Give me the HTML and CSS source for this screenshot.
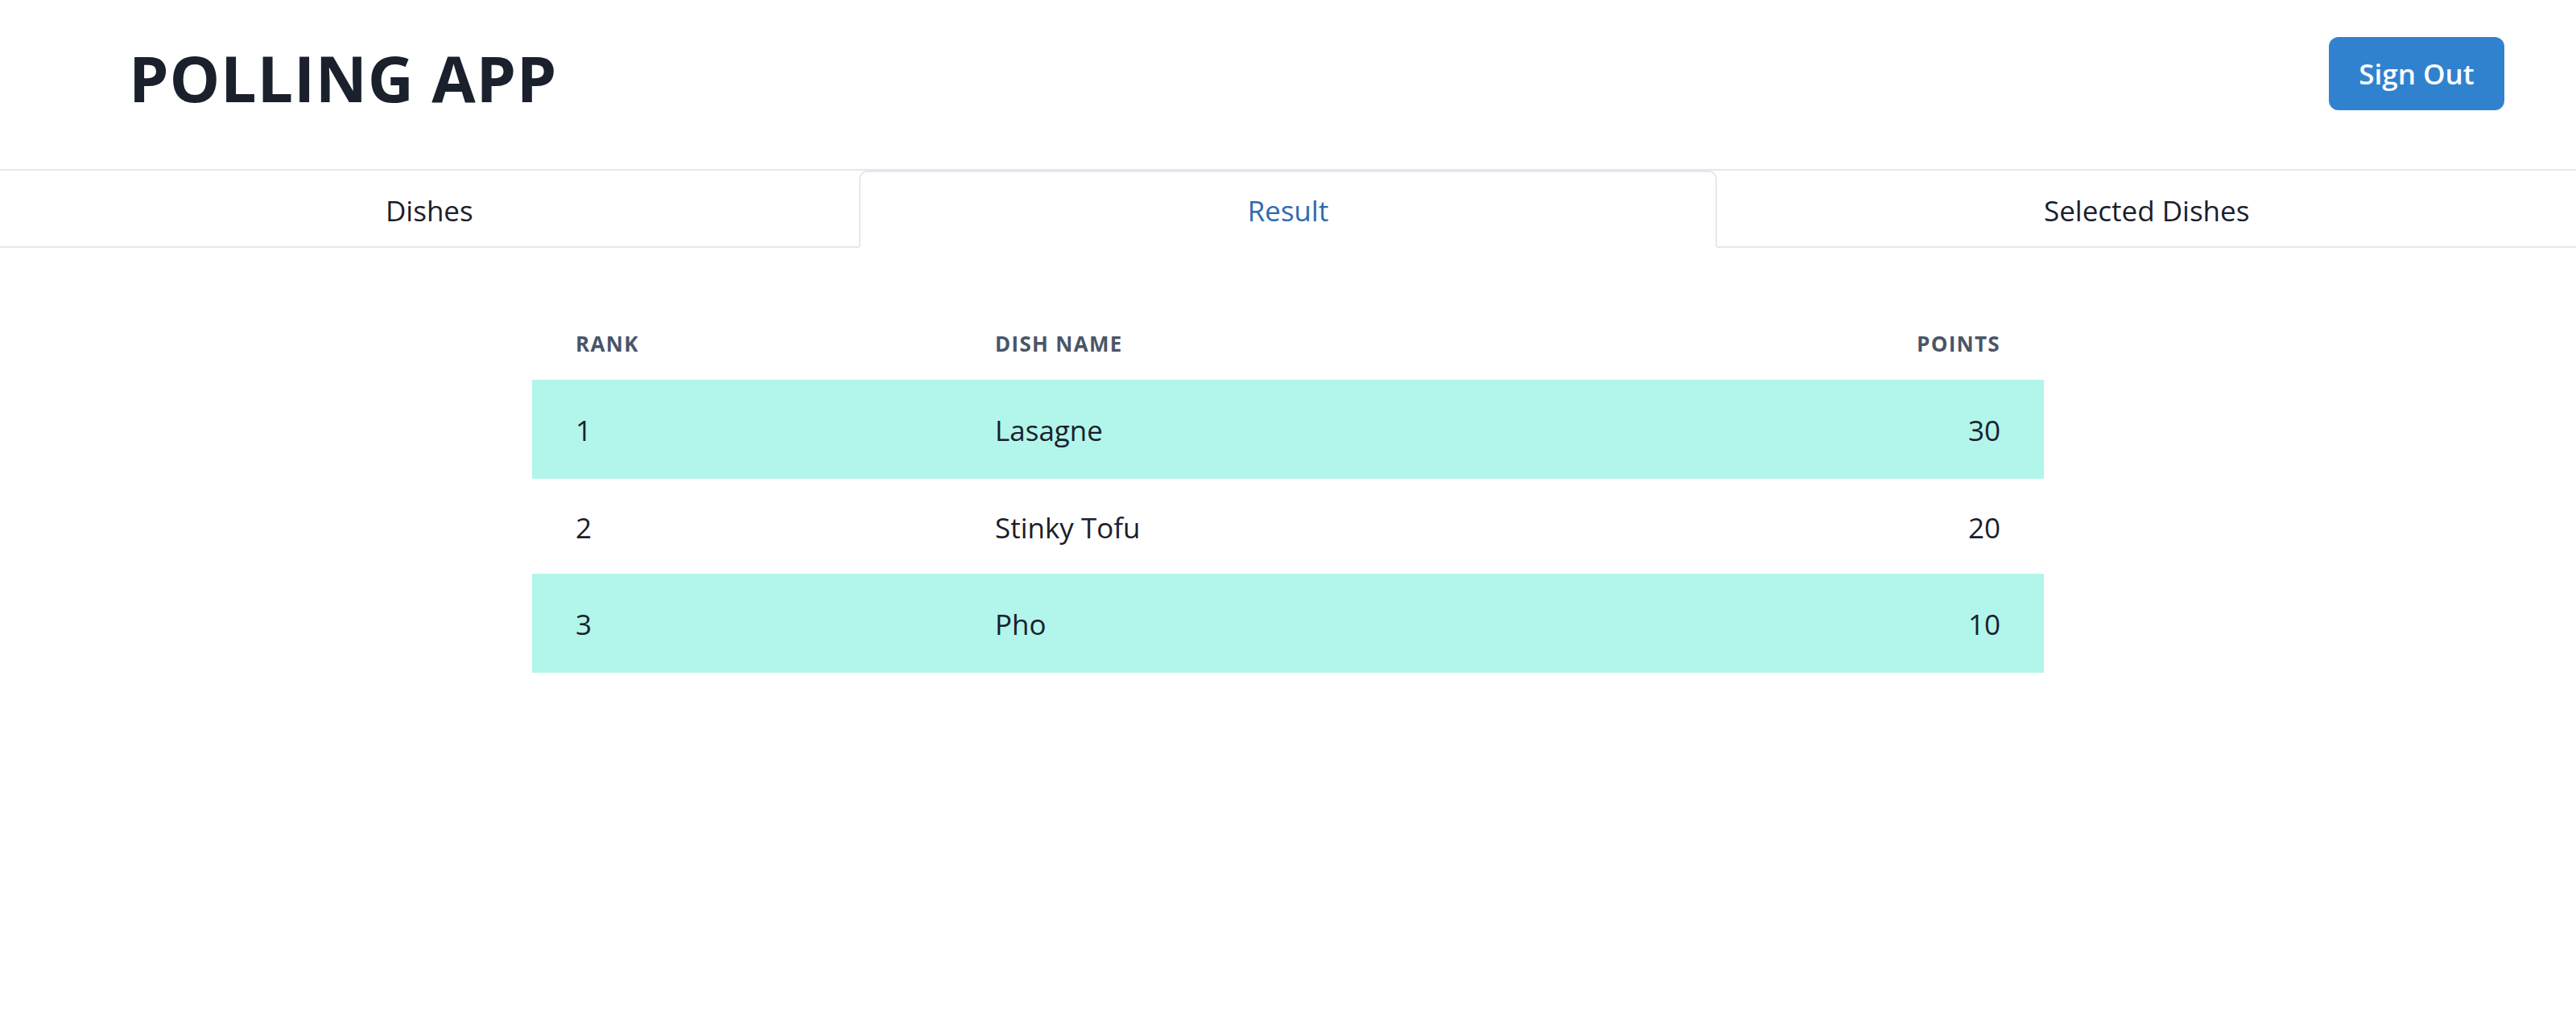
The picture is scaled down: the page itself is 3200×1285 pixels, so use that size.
FILE: index.html
```html
<!DOCTYPE html>
<html lang="en">
<head>
<meta charset="utf-8">
<title>Polling App</title>
<link rel="stylesheet" href="styles.css">
</head>
<body>
  <header class="app-header">
    <h1 class="app-title">POLLING APP</h1>
    <button class="signout-btn" type="button">Sign Out</button>
  </header>
  <nav class="tablist">
    <div class="tab">Dishes</div>
    <div class="tab tab-selected">Result</div>
    <div class="tab">Selected Dishes</div>
  </nav>
  <main class="panel">
    <table class="result-table">
      <thead>
        <tr>
          <th class="col-rank">Rank</th>
          <th class="col-name">Dish Name</th>
          <th class="col-points">Points</th>
        </tr>
      </thead>
      <tbody>
        <tr class="row-hl">
          <td class="col-rank">1</td>
          <td class="col-name">Lasagne</td>
          <td class="col-points">30</td>
        </tr>
        <tr class="row-plain">
          <td class="col-rank">2</td>
          <td class="col-name">Stinky Tofu</td>
          <td class="col-points">20</td>
        </tr>
        <tr class="row-hl">
          <td class="col-rank">3</td>
          <td class="col-name">Pho</td>
          <td class="col-points">10</td>
        </tr>
      </tbody>
    </table>
  </main>
</body>
</html>
```

FILE: styles.css
```css
* {
  box-sizing: border-box;
}

html, body {
  margin: 0;
  padding: 0;
  background: #ffffff;
}

body {
  font-family: "Open Sans", "Noto Sans", "Liberation Sans", sans-serif;
  color: #1A202C;
}

.app-header {
  display: flex;
  justify-content: space-between;
  align-items: flex-start;
  height: 212px;
  padding: 0 89px 0 160px;
  border-bottom: 2px solid #E2E8F0;
}

.app-title {
  margin: 50px 0 0 0;
  font-size: 79px;
  line-height: 1.2;
  font-weight: 700;
  letter-spacing: 0.01em;
  color: #1A202C;
}

.signout-btn {
  margin-top: 46px;
  width: 218px;
  height: 91px;
  border: none;
  border-radius: 12px;
  background: #3182CE;
  color: #ffffff;
  font-family: inherit;
  font-size: 35px;
  font-weight: 600;
  line-height: 1.2;
  display: flex;
  align-items: center;
  justify-content: center;
  padding: 0;
}

.tablist {
  display: flex;
  height: 96px;
  border-bottom: 2px solid #E2E8F0;
}

.tab {
  flex: 1 1 0;
  height: 96px;
  margin-bottom: -2px;
  padding-top: 3px;
  border: 2px solid transparent;
  display: flex;
  align-items: center;
  justify-content: center;
  font-size: 35px;
  line-height: 1.2;
  color: #1A202C;
}

.tab-selected {
  border-color: #E2E8F0;
  border-bottom-color: #ffffff;
  border-radius: 10px 10px 0 0;
  color: #2B6CB0;
}

.panel {
  padding: 74px 0 0;
}

.result-table {
  width: 1878px;
  margin: 0 auto;
  border-collapse: collapse;
  border-spacing: 0;
}

.result-table th {
  height: 90px;
  padding: 0 54px;
  font-size: 26px;
  font-weight: 700;
  letter-spacing: 0.05em;
  text-transform: uppercase;
  color: #4A5568;
  vertical-align: middle;
  text-align: left;
}

.result-table td {
  padding: 2px 54px 0;
  font-size: 35px;
  color: #1A202C;
  vertical-align: middle;
  text-align: left;
}

.result-table .col-rank {
  width: 521px;
}

.result-table .col-points {
  text-align: right;
}

.row-hl td {
  height: 123px;
  background: #B2F5EA;
}

.row-plain td {
  height: 118px;
  background: #ffffff;
}
```
